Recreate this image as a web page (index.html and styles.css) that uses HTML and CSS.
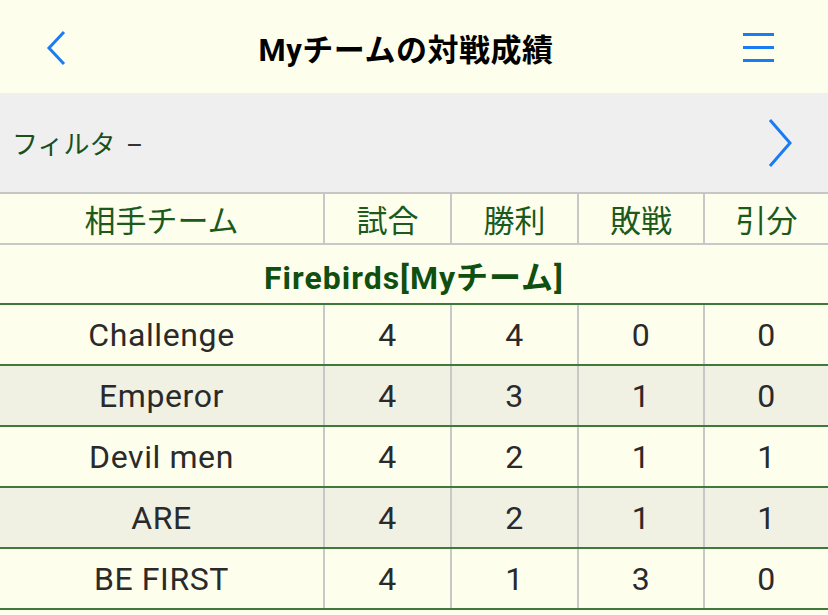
FILE: index.html
```html
<!DOCTYPE html>
<html lang="ja">
<head>
<meta charset="utf-8">
<link rel="stylesheet" href="styles.css">
</head>
<body>
<div class="page">
  <header class="nav">
    <svg class="back" width="24" height="36" viewBox="0 0 24 36"><polyline points="18,2 3,18 18,34" fill="none" stroke="#1a7cf5" stroke-width="3"/></svg>
    <h1 class="title">Myチームの対戦成績</h1>
    <svg class="menu" width="34" height="32" viewBox="0 0 34 32"><rect x="1" y="3" width="31" height="3" fill="#1a7cf5"/><rect x="1" y="16" width="31" height="3" fill="#1a7cf5"/><rect x="1" y="29" width="31" height="3" fill="#1a7cf5"/></svg>
  </header>
  <div class="filter">
    <span class="filter-label">フィルタ <span class="dash">–</span></span>
    <svg class="fwd" width="28" height="50" viewBox="0 0 28 50"><polyline points="4,2 24,25 4,48" fill="none" stroke="#1a7cf5" stroke-width="3"/></svg>
  </div>
  <div class="row head">
    <div class="cell">相手チーム</div>
    <div class="cell">試合</div>
    <div class="cell">勝利</div>
    <div class="cell">敗戦</div>
    <div class="cell">引分</div>
  </div>
  <div class="team">Firebirds[Myチーム]</div>
  <div class="row data">
    <div class="cell">Challenge</div><div class="cell">4</div><div class="cell">4</div><div class="cell">0</div><div class="cell">0</div>
  </div>
  <div class="row data alt">
    <div class="cell">Emperor</div><div class="cell">4</div><div class="cell">3</div><div class="cell">1</div><div class="cell">0</div>
  </div>
  <div class="row data">
    <div class="cell">Devil men</div><div class="cell">4</div><div class="cell">2</div><div class="cell">1</div><div class="cell">1</div>
  </div>
  <div class="row data alt">
    <div class="cell">ARE</div><div class="cell">4</div><div class="cell">2</div><div class="cell">1</div><div class="cell">1</div>
  </div>
  <div class="row data">
    <div class="cell">BE FIRST</div><div class="cell">4</div><div class="cell">1</div><div class="cell">3</div><div class="cell">0</div>
  </div>
</div>
</body>
</html>
```
FILE: styles.css
```css
html, body {
  margin: 0;
  padding: 0;
  background: #fefeed;
}
.page {
  width: 828px;
  height: 615px;
  overflow: hidden;
  font-family: Roboto, "Noto Sans CJK JP", sans-serif;
  background: #fefeed;
}
.nav {
  height: 93px;
  display: flex;
  align-items: center;
  justify-content: space-between;
  padding: 0 52px 0 46px;
  box-sizing: border-box;
}
.back { display: block; margin-top: 2px; }
.menu { display: block; margin-top: -2px; }
.title {
  margin: 2px 0 0 0;
  font-size: 31px;
  font-weight: 700;
  color: #000;
  letter-spacing: 0.5px;
  font-family: Roboto, "Noto Sans CJK JP", sans-serif;
}
.filter {
  height: 99px;
  background: #efefef;
  display: flex;
  align-items: center;
  justify-content: space-between;
  padding: 0 34px 0 12px;
  border-bottom: 2px solid #c6c6c6;
}
.filter-label {
  font-size: 26px;
  color: #1a4f1a;
}
.dash { color: #333; margin-left: 4px; }
.fwd { display: block; }
.row {
  display: grid;
  grid-template-columns: 323px 127px 127px 126px 125px;
}
.cell {
  display: flex;
  align-items: center;
  justify-content: center;
}
.cell + .cell {
  border-left: 2px solid #c8c8c8;
}
.head {
  height: 49px;
  border-bottom: 2px solid #c8c8c8;
}
.head .cell {
  font-size: 31px;
  color: #1b5a1b;
}
.team {
  height: 60px;
  display: flex;
  align-items: center;
  justify-content: center;
  font-size: 32px;
  font-weight: 700;
  letter-spacing: 1px;
  color: #0f4f0f;
  border-bottom: 2px solid #3f7a3a;
  padding-top: 2px;
  box-sizing: border-box;
}
.data {
  height: 59px;
  border-bottom: 2px solid #3f7a3a;
}
.data .cell {
  font-size: 32px;
  letter-spacing: 0.6px;
  color: #2a2a2a;
}
.alt { background: #f0f0e3; }
```
